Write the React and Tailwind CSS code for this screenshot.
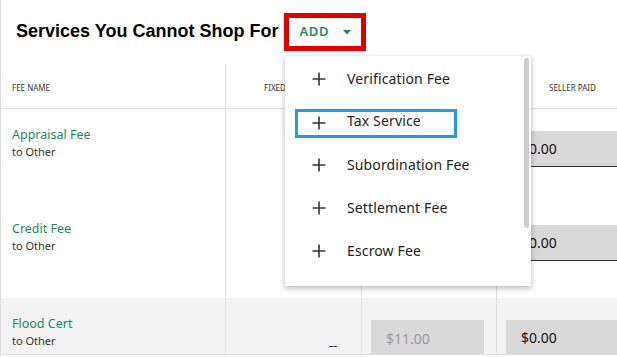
import React from "react";

const GREEN = "text-[#1e8a5a]";

function Plus() {
  return (
    <svg width="14" height="14" viewBox="0 0 14 14" className="shrink-0">
      <path d="M7 0.5V13.5M0.5 7H13.5" stroke="#333" strokeWidth="1.6" />
    </svg>
  );
}

function Input({ value, disabled }) {
  return (
    <div
      className={
        "mt-[22px] h-[36px] w-[113px] bg-[#d9d9d9] pl-[15px] flex items-center text-[14px] " +
        (disabled ? "text-[#999]" : "text-[#111] border-b border-[#333]")
      }
    >
      {value}
    </div>
  );
}

function Row({ name, h, bg, fixed, a, b, disabledA }) {
  return (
    <div className={"grid grid-cols-[225px_136px_135px_1fr] " + h + " " + bg}>
      <div className="border-r border-[#ddd] pl-[11px] pt-[17px]">
        <div className={"text-[12.5px] leading-[18px] " + GREEN}>{name}</div>
        <div className="text-[11px] leading-[16px] text-[#333]">to Other</div>
      </div>
      <div className="border-r border-[#ddd] pr-[24px] pt-[39px] text-right text-[12px] text-[#111]">
        {fixed}
      </div>
      <div className="border-r border-[#ddd] pl-[9px]">
        <Input value={a} disabled={disabledA} />
      </div>
      <div className="pl-[9px]">
        <Input value={b} />
      </div>
    </div>
  );
}

export default function App() {
  const items = [
    "Verification Fee",
    "Tax Service",
    "Subordination Fee",
    "Settlement Fee",
    "Escrow Fee",
  ];
  return (
    <div
      className="relative w-[617px] h-[357px] overflow-hidden bg-white border-l border-[#ddd]"
      style={{ fontFamily: '"Noto Sans", "Open Sans", sans-serif' }}
    >
      <div className="flex items-center h-[64px] pl-[15px] pb-[1px]">
        <div
          className="text-[18px] font-bold text-black"
          style={{ fontFamily: '"Liberation Sans", Arial, sans-serif' }}
        >
          Services You Cannot Shop For
        </div>
        <div className="ml-[6px] h-[38px] w-[82px] border-[5px] border-[#e00000] flex items-center pl-[10px]">
          <span className={"text-[13px] font-semibold tracking-[0.05em] " + GREEN}>ADD</span>
          <svg width="8" height="5" viewBox="0 0 8 5" className="ml-[14px] mt-[2px]">
            <path d="M0 0H8L4 4.5Z" fill="#1e8a5a" />
          </svg>
        </div>
      </div>

      <div className="h-[291px] overflow-hidden border-b border-[#ddd]">
        <div className="grid grid-cols-[225px_136px_135px_1fr] h-[45px] border-b border-[#ddd] text-[8px] leading-[12px] text-[#333] uppercase">
          <div className="border-r border-[#ddd] pl-[11px] pt-[18px]">Fee Name</div>
          <div className="border-r border-[#ddd] pt-[18px] text-center">Fixed Amount</div>
          <div className="border-r border-[#ddd] pt-[18px] text-center">Borrower Paid</div>
          <div className="pt-[18px] pl-[52px]">Seller Paid</div>
        </div>
        <Row name="Appraisal Fee" h="h-[94px]" bg="bg-white" fixed="--" a="$450.00" b="$0.00" disabledA />
        <Row name="Credit Fee" h="h-[95px]" bg="bg-white" fixed="--" a="$25.00" b="$0.00" disabledA />
        <Row name="Flood Cert" h="h-[95px]" bg="bg-[#f3f3f3]" fixed="--" a="$11.00" b="$0.00" disabledA />
      </div>

      <div className="absolute left-[284px] top-[56px] w-[246px] h-[230px] bg-white shadow-[0_2px_6px_rgba(0,0,0,0.3)]">
        <div className="absolute right-[2px] top-[2px] w-[5px] h-[170px] rounded-full bg-[#cdcdcd]" />
        <div className="pt-[1px]">
          {items.map((t, i) => (
            <div key={t} className="h-[43px] flex items-center px-[10px]">
              <div
                className={
                  "flex items-center h-[29px] w-[162px] pl-[14px] border-[3px] " +
                  (i === 1 ? "border-[#1e9be9] mt-[3px]" : "border-transparent")
                }
              >
                <Plus />
                <span className={"ml-[21px] text-[14px] tracking-[0.01em] text-[#222] whitespace-nowrap " + (i === 1 ? "-mt-[5px]" : "")}>{t}</span>
              </div>
            </div>
          ))}
        </div>
      </div>
    </div>
  );
}
